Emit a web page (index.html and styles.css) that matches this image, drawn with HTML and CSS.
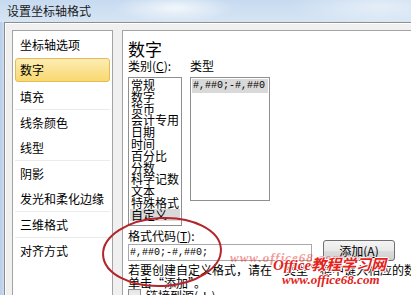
FILE: index.html
```html
<!DOCTYPE html>
<html lang="zh-CN">
<head>
<meta charset="UTF-8">
<title>设置坐标轴格式</title>
<link rel="stylesheet" href="styles.css">
</head>
<body>
<div class="window">
  <div class="titlebar">设置坐标轴格式</div>
  <div class="dialog">
    <ul class="nav">
      <li>坐标轴选项</li>
      <li class="active">数字</li>
      <li class="sep-after">填充</li>
      <li>线条颜色</li>
      <li class="sep-after">线型</li>
      <li>阴影</li>
      <li class="sep-after">发光和柔化边缘</li>
      <li class="sep-after">三维格式</li>
      <li>对齐方式</li>
    </ul>
    <div class="panel">
      <h2>数字</h2>
      <div class="lists">
        <div class="list-col">
          <div class="label">类别(<u>C</u>):</div>
          <ul class="listbox category">
            <li>常规</li>
            <li>数字</li>
            <li>货币</li>
            <li>会计专用</li>
            <li>日期</li>
            <li>时间</li>
            <li>百分比</li>
            <li>分数</li>
            <li>科学记数</li>
            <li>文本</li>
            <li>特殊格式</li>
            <li class="selected">自定义</li>
          </ul>
        </div>
        <div class="list-col">
          <div class="label">类型</div>
          <ul class="listbox types">
            <li class="selected">#,##0;-#,##0</li>
          </ul>
        </div>
      </div>
      <div class="code-row">
        <div class="code-field">
          <div class="label">格式代码(<u>T</u>):</div>
          <div class="input">#,##0;-#,##0;</div>
        </div>
        <button class="btn">添加(<u>A</u>)</button>
      </div>
      <p class="hint">若要创建自定义格式，请在“类型”框中键入相应的数字格式代码，然后<br>单击“添加”。</p>
      <label class="check"><span class="box"></span>链接到源(<u>I</u>)</label>
    </div>
  </div>

  <svg class="circle" width="411" height="295" viewBox="0 0 411 295">
    <ellipse cx="162" cy="252" rx="59" ry="34" fill="none" stroke="#b4242a" stroke-width="2" transform="rotate(-3 162 252)"/>
  </svg>
  <div class="watermark">
    <div class="wm-back">www.office68.com</div>
    <div class="wm-main">Office教程学习网</div>
    <div class="wm-url">www.office68.com</div>
  </div>
</div>
</body>
</html>
```

FILE: styles.css
```css
body {
  margin: 0;
  background: #c2d6ee;
  font-family: "Noto Sans CJK SC", "Liberation Sans", sans-serif;
  font-size: 12px;
  color: #000;
}
.window {
  position: relative;
  width: 411px;
  height: 295px;
  overflow: hidden;
  background: linear-gradient(90deg, #b9cfe9, #c9dbef 4px, #c9dbef);
}
.titlebar {
  height: 22px;
  line-height: 22px;
  padding-left: 7px;
  color: #1a1a1a;
  font-size: 12px;
  background:
    radial-gradient(ellipse 60px 14px at 175px 8px, rgba(255, 255, 255, 0.75), rgba(255, 255, 255, 0)),
    radial-gradient(ellipse 90px 18px at 380px 6px, rgba(255, 255, 255, 0.5), rgba(255, 255, 255, 0)),
    linear-gradient(#c6daf0, #d7e5f4);
}
.dialog {
  display: flex;
  gap: 9px;
  height: 272px;
  margin-left: 4px;
  padding: 7px 0 0 7px;
  background: #f0f0f0;
  border-top: 1px solid #8e8e8e;
  border-left: 1px solid #8e8e8e;
  box-shadow: inset 1px 1px 0 #ffffff;
}

/* 左侧导航 */
.nav {
  list-style: none;
  margin: 0;
  padding: 1px 2px 0;
  width: 95px;
  background: #fff;
  border: 1px solid #a3a3a3;
}
.nav li {
  height: 25px;
  line-height: 25px;
  padding-left: 5px;
  white-space: nowrap;
}
.nav li.sep-after {
  border-bottom: 1px solid #ececec;
}
.nav li.active {
  height: 22px;
  line-height: 22px;
  margin: 1px 0 2px;
  border: 1px solid #e2bd55;
  border-radius: 3px;
  padding-left: 4px;
  background: linear-gradient(#fdedb4, #f9d870);
}

/* 右侧面板 */
.panel {
  flex: 1;
  padding: 8px 0 0 5px;
  background: #fff;
  border: 1px solid #a3a3a3;
  border-right: none;
  overflow: hidden;
  white-space: nowrap;
}
.panel h2 {
  margin: 0;
  font-size: 17px;
  font-weight: normal;
  line-height: 20px;
}
.label {
  line-height: 14px;
  height: 14px;
}
.lists {
  display: flex;
  gap: 8px;
}
.listbox {
  list-style: none;
  margin: 4px 0 0;
  padding: 1px 1px 0;
  background: #fff;
  border: 1px solid #8f8f8f;
}
.listbox.category {
  width: 50px;
  height: 146px;
  line-height: 11.8px;
}
.listbox.category li {
  height: 11.8px;
  padding-left: 1px;
}
.listbox li.selected {
  background: #d9d9d9;
}
.listbox.types {
  width: 76px;
  height: 121px;
}
.listbox.types li {
  height: 14px;
  line-height: 14px;
  padding-left: 1px;
  font-family: "Liberation Mono", monospace;
  font-size: 10px;
}
.code-row {
  display: flex;
  align-items: flex-end;
  gap: 11px;
  margin-top: 3px;
}
.code-field .label {
  line-height: 14px;
  height: 15px;
}
.input {
  width: 181px;
  height: 15px;
  line-height: 15px;
  padding-left: 1px;
  border: 1px solid #a9a9a9;
  font-family: "Liberation Mono", monospace;
  font-size: 10px;
}
.btn {
  width: 72px;
  height: 21px;
  padding: 0;
  font-family: inherit;
  font-size: 12px;
  border: 1px solid #707070;
  border-radius: 3px;
  background: linear-gradient(#f4f4f4 0%, #e9e9e9 50%, #dcdcdc 51%, #d0d0d0 100%);
  color: #000;
}
.hint {
  margin: 2px 0 0;
  line-height: 13px;
}
.check {
  display: flex;
  align-items: center;
  gap: 5px;
  line-height: 13px;
}
.check .box {
  width: 11px;
  height: 11px;
  border: 1px solid #8f8f8f;
  background: linear-gradient(#e4e4e4, #fafafa);
}

/* 红圈和水印 */
.circle {
  position: absolute;
  left: 0;
  top: 0;
}
.watermark {
  position: absolute;
  left: 228px;
  top: 252px;
  font-family: "Liberation Serif", "Noto Sans CJK SC", serif;
  font-style: italic;
  font-weight: bold;
  color: #e3231c;
}
.wm-back {
  position: absolute;
  left: 2px;
  top: 0;
  font-size: 13px;
  line-height: 12px;
  letter-spacing: 1px;
  opacity: 0.45;
}
.wm-main {
  position: absolute;
  left: 45px;
  top: 5px;
  font-size: 15px;
  line-height: 16px;
  white-space: nowrap;
  text-shadow: 1px 0 #fff, -1px 0 #fff, 0 1px #fff, 0 -1px #fff;
}
.wm-url {
  position: absolute;
  left: 54px;
  top: 21px;
  font-size: 13px;
  line-height: 14px;
  white-space: nowrap;
  text-shadow: 1px 0 #fff, -1px 0 #fff, 0 1px #fff, 0 -1px #fff;
}
```
